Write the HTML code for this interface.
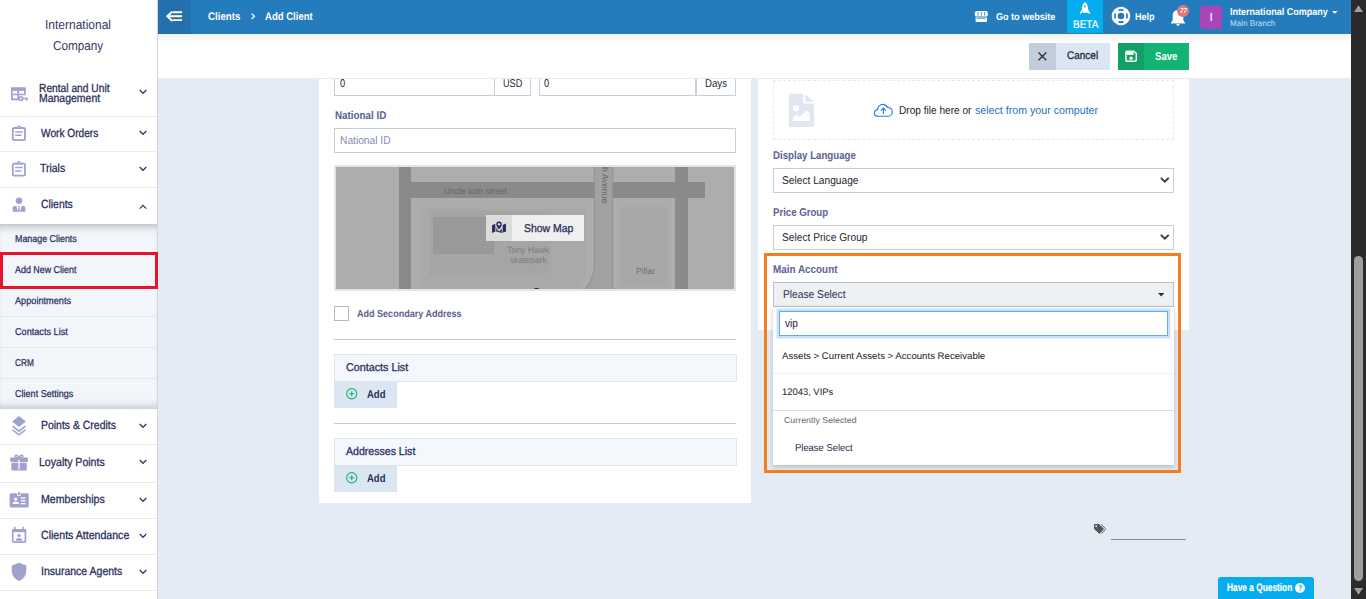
<!DOCTYPE html>
<html lang="en">
<head>
<meta charset="utf-8">
<title>Add Client</title>
<style>
*{box-sizing:border-box;margin:0;padding:0}
html,body{width:1366px;height:599px;overflow:hidden}
body{position:relative;background:#e4ebf4;font-family:"Liberation Sans",sans-serif;color:#2b2e5c;font-size:12px}
.abs{position:absolute}
.t{position:absolute;white-space:nowrap;line-height:1;transform-origin:0 0;text-rendering:geometricPrecision}
svg{position:absolute;overflow:visible}
#side{position:absolute;left:0;top:0;width:158px;height:599px;background:#fff;border-right:1px solid #d4d8de;z-index:5}
#hdr{position:absolute;left:158px;top:0;width:1193px;height:34px;background:#247cbd;z-index:4}
#bar{position:absolute;left:158px;top:34px;width:1193px;height:45px;background:linear-gradient(#f1f1f1,#fff 9px);z-index:3;border-bottom:1px solid #e8ebef}
#sb{position:absolute;left:1351px;top:0;width:15px;height:599px;background:#2b2b2b;z-index:9}
#main{position:absolute;left:0;top:0;width:1351px;height:599px;z-index:1;overflow:hidden}
#over{position:absolute;left:0;top:0;width:1351px;height:599px;z-index:2;overflow:hidden}
</style>
</head>
<body>
<div id="side">
<div class="t" style="left:45.00px;top:18.00px;font-size:13px;color:#34375f;transform:scaleX(0.9223);">International</div>
<div class="t" style="left:53.00px;top:39.00px;font-size:13px;color:#34375f;transform:scaleX(0.9025);">Company</div>
<div class="abs" style="left:0px;top:116px;width:157px;height:1px;background:#ececee;"></div>
<div class="abs" style="left:0px;top:151px;width:157px;height:1px;background:#ececee;"></div>
<div class="abs" style="left:0px;top:187px;width:157px;height:1px;background:#ececee;"></div>
<div class="abs" style="left:0px;top:444px;width:157px;height:1px;background:#ececee;"></div>
<div class="abs" style="left:0px;top:482px;width:157px;height:1px;background:#ececee;"></div>
<div class="abs" style="left:0px;top:518px;width:157px;height:1px;background:#ececee;"></div>
<div class="abs" style="left:0px;top:554px;width:157px;height:1px;background:#ececee;"></div>
<div class="abs" style="left:0px;top:590px;width:157px;height:1px;background:#ececee;"></div>
<div class="abs" style="left:0px;top:224px;width:157px;height:184.5px;background:#f2f5fa;box-shadow:inset 0 9px 8px -7px rgba(30,35,45,.30),inset 0 -9px 8px -7px rgba(30,35,45,.24);"></div>
<div class="abs" style="left:0px;top:316px;width:157px;height:1px;background:#e2e7ee;"></div>
<div class="abs" style="left:0px;top:347px;width:157px;height:1px;background:#e2e7ee;"></div>
<div class="abs" style="left:0px;top:378px;width:157px;height:1px;background:#e2e7ee;"></div>
<div class="abs" style="left:0px;top:252px;width:158px;height:36.5px;border:3px solid #e8122d;"></div>
<div class="t" style="left:39.40px;top:83.00px;font-size:11.8px;color:#2b2e5c;transform:scaleX(0.8669);-webkit-text-stroke:0.3px #2b2e5c;">Rental and Unit</div>
<div class="t" style="left:39.40px;top:93.00px;font-size:11.8px;color:#2b2e5c;transform:scaleX(0.8878);-webkit-text-stroke:0.3px #2b2e5c;">Management</div>
<div class="t" style="left:40.60px;top:128.00px;font-size:11.8px;color:#2b2e5c;transform:scaleX(0.8599);-webkit-text-stroke:0.3px #2b2e5c;">Work Orders</div>
<div class="t" style="left:40.40px;top:163.00px;font-size:11.8px;color:#2b2e5c;transform:scaleX(0.8862);-webkit-text-stroke:0.3px #2b2e5c;">Trials</div>
<div class="t" style="left:40.70px;top:199.00px;font-size:11.8px;color:#2b2e5c;transform:scaleX(0.8803);-webkit-text-stroke:0.3px #2b2e5c;">Clients</div>
<div class="t" style="left:15.20px;top:235.00px;font-size:10px;color:#2b2e5c;transform:scaleX(0.8892);-webkit-text-stroke:0.25px #2b2e5c;">Manage Clients</div>
<div class="t" style="left:15.20px;top:266.00px;font-size:10px;color:#2b2e5c;transform:scaleX(0.8907);-webkit-text-stroke:0.25px #2b2e5c;">Add New Client</div>
<div class="t" style="left:15.20px;top:297.00px;font-size:10px;color:#2b2e5c;transform:scaleX(0.9162);-webkit-text-stroke:0.25px #2b2e5c;">Appointments</div>
<div class="t" style="left:15.20px;top:328.00px;font-size:10px;color:#2b2e5c;transform:scaleX(0.9133);-webkit-text-stroke:0.25px #2b2e5c;">Contacts List</div>
<div class="t" style="left:15.20px;top:359.00px;font-size:10px;color:#2b2e5c;transform:scaleX(0.8264);-webkit-text-stroke:0.25px #2b2e5c;">CRM</div>
<div class="t" style="left:15.20px;top:390.00px;font-size:10px;color:#2b2e5c;transform:scaleX(0.9054);-webkit-text-stroke:0.25px #2b2e5c;">Client Settings</div>
<div class="t" style="left:40.60px;top:420.00px;font-size:11.8px;color:#2b2e5c;transform:scaleX(0.8856);-webkit-text-stroke:0.3px #2b2e5c;">Points &amp; Credits</div>
<div class="t" style="left:39.40px;top:457.00px;font-size:11.8px;color:#2b2e5c;transform:scaleX(0.8945);-webkit-text-stroke:0.3px #2b2e5c;">Loyalty Points</div>
<div class="t" style="left:40.60px;top:494.00px;font-size:11.8px;color:#2b2e5c;transform:scaleX(0.9002);-webkit-text-stroke:0.3px #2b2e5c;">Memberships</div>
<div class="t" style="left:40.60px;top:530.00px;font-size:11.8px;color:#2b2e5c;transform:scaleX(0.8975);-webkit-text-stroke:0.3px #2b2e5c;">Clients Attendance</div>
<div class="t" style="left:40.60px;top:566.00px;font-size:11.8px;color:#2b2e5c;transform:scaleX(0.8914);-webkit-text-stroke:0.3px #2b2e5c;">Insurance Agents</div>
<svg style="left:138.8px;top:88.80000000000001px" width="8" height="6" viewBox="0 0 8 6"><path d="M0.7 1 L4 4.3 L7.3 1" fill="none" stroke="#33365f" stroke-width="1.25"/></svg>
<svg style="left:138.8px;top:130.4px" width="8" height="6" viewBox="0 0 8 6"><path d="M0.7 1 L4 4.3 L7.3 1" fill="none" stroke="#33365f" stroke-width="1.25"/></svg>
<svg style="left:138.8px;top:166.0px" width="8" height="6" viewBox="0 0 8 6"><path d="M0.7 1 L4 4.3 L7.3 1" fill="none" stroke="#33365f" stroke-width="1.25"/></svg>
<svg style="left:138.8px;top:423.0px" width="8" height="6" viewBox="0 0 8 6"><path d="M0.7 1 L4 4.3 L7.3 1" fill="none" stroke="#33365f" stroke-width="1.25"/></svg>
<svg style="left:138.8px;top:459.4px" width="8" height="6" viewBox="0 0 8 6"><path d="M0.7 1 L4 4.3 L7.3 1" fill="none" stroke="#33365f" stroke-width="1.25"/></svg>
<svg style="left:138.8px;top:496.9px" width="8" height="6" viewBox="0 0 8 6"><path d="M0.7 1 L4 4.3 L7.3 1" fill="none" stroke="#33365f" stroke-width="1.25"/></svg>
<svg style="left:138.8px;top:533.0px" width="8" height="6" viewBox="0 0 8 6"><path d="M0.7 1 L4 4.3 L7.3 1" fill="none" stroke="#33365f" stroke-width="1.25"/></svg>
<svg style="left:138.8px;top:569.0px" width="8" height="6" viewBox="0 0 8 6"><path d="M0.7 1 L4 4.3 L7.3 1" fill="none" stroke="#33365f" stroke-width="1.25"/></svg>
<svg style="left:138.8px;top:203.8px" width="8" height="6" viewBox="0 0 8 6"><path d="M0.7 4.6 L4 1.3 L7.3 4.6" fill="none" stroke="#33365f" stroke-width="1.25"/></svg>
<svg style="left:0;top:0" width="40" height="599" viewBox="0 0 40 599">
<g fill="none" stroke="#a0a1ce" stroke-width="1.7"><path d="M18.8 99.4 H11.9 V88.4 H24.9 V95"/><path d="M11.9 94.5 H24.9 M18.2 90 V99.4"/><circle cx="20.9" cy="98.5" r="1.8" stroke-width="1.6"/><path d="M22.8 98.5 H28 M26.6 98.5 V100.7" stroke-width="1.7"/></g><rect x="11.05" y="87.5" width="14.7" height="3.4" fill="#a0a1ce"/>
<g transform="translate(0 0)"><rect x="12.8" y="128" width="12.2" height="12.1" rx="1.2" fill="none" stroke="#a0a1ce" stroke-width="1.8"/><path d="M15.2 132 H22.7 M15.2 135.3 H21.5" stroke="#a0a1ce" stroke-width="1.5"/><path d="M15.2 128.8 V127.4 H17 C17.1 126 17.9 125.2 18.9 125.2 C19.9 125.2 20.7 126 20.8 127.4 H22.6 V128.8 Z" fill="#a0a1ce"/><circle cx="18.9" cy="127.1" r="0.6" fill="#fff"/></g>
<g transform="translate(0 35.6)"><rect x="12.8" y="128" width="12.2" height="12.1" rx="1.2" fill="none" stroke="#a0a1ce" stroke-width="1.8"/><path d="M15.2 132 H22.7 M15.2 135.3 H21.5" stroke="#a0a1ce" stroke-width="1.5"/><path d="M15.2 128.8 V127.4 H17 C17.1 126 17.9 125.2 18.9 125.2 C19.9 125.2 20.7 126 20.8 127.4 H22.6 V128.8 Z" fill="#a0a1ce"/><circle cx="18.9" cy="127.1" r="0.6" fill="#fff"/></g>
<g fill="#a0a1ce"><circle cx="19" cy="200.8" r="3.25"/><path d="M12.7 211.8 V208.2 C12.7 206.9 13.7 206 15 206 H16.4 L18.1 211.8 Z"/><path d="M25.4 211.8 V208.2 C25.4 206.9 24.4 206 23.1 206 H21.7 L20 211.8 Z"/><path d="M18.2 206.1 H19.9 L19.5 207.4 L20.2 211.8 H17.9 L18.6 207.4 Z"/></g>
<path d="M19 416 L25.9 421.5 L19 427 L12.1 421.5 Z" fill="#a0a1ce"/><path d="M12.6 426.2 L19 431.2 L25.4 426.2 M12.6 429.8 L19 434.8 L25.4 429.8" fill="none" stroke="#a0a1ce" stroke-width="1.6"/>
<g fill="#a0a1ce"><rect x="10.2" y="457.6" width="17.7" height="4.4" rx="0.8"/><rect x="11.3" y="462.8" width="15.5" height="7.8" rx="1"/></g><rect x="18.4" y="459.8" width="1.3" height="9.6" fill="#fff"/><path d="M19 457.4 C16.4 457.6 14.6 457 15.2 455.8 C16 454.6 18.2 455.4 19 457.4 C19.8 455.4 22 454.6 22.8 455.8 C23.4 457 21.6 457.6 19 457.4 Z" fill="none" stroke="#a0a1ce" stroke-width="1.5"/>
<rect x="9.6" y="493.3" width="19.1" height="14.3" rx="1.6" fill="#a0a1ce"/><rect x="17.2" y="493" width="3.4" height="2.9" fill="#fff"/><rect x="18" y="491.8" width="1.9" height="3.4" rx="0.6" fill="#a0a1ce"/><g fill="#fff"><circle cx="15.7" cy="499.1" r="1.65"/><path d="M12.6 504 C12.6 502.2 13.8 501.5 15.7 501.5 C17.6 501.5 18.9 502.2 18.9 504 Z"/><rect x="20.8" y="497.4" width="4.7" height="1.3"/><rect x="20.8" y="500.2" width="4.7" height="1.3"/><rect x="20.8" y="503" width="4.7" height="1.3"/></g>
<rect x="12.7" y="529.9" width="12.7" height="12.2" rx="1.2" fill="none" stroke="#a0a1ce" stroke-width="1.7"/><rect x="12" y="529.1" width="14.1" height="3.1" fill="#a0a1ce"/><rect x="14" y="526.9" width="1.6" height="3" fill="#a0a1ce"/><rect x="22.4" y="526.9" width="1.6" height="3" fill="#a0a1ce"/><ellipse cx="19" cy="535.6" rx="1.8" ry="1.6" fill="#a0a1ce"/><path d="M15.7 540.7 C15.7 538.7 17 537.9 19 537.9 C21 537.9 22.4 538.7 22.4 540.7 Z" fill="#a0a1ce"/>
<path d="M19 562.8 L26.3 565.6 V571 C26.3 575.4 23.4 579 19 581 C14.6 579 11.8 575.4 11.8 571 V565.6 Z" fill="#a0a1ce"/>
</svg>
</div>
<div id="hdr">
<div class="abs" style="left:0px;top:0px;width:33px;height:34px;background:#2270ad;"></div>
<svg style="left:8px;top:11px" width="17" height="11" viewBox="166 11 17 11"><g fill="none" stroke="#fff"><path d="M172.8 12.3 H182.1 M172.8 20.1 H182.1" stroke-width="1.9"/><path d="M168.4 16.2 H182.1" stroke-width="2"/><path d="M172.4 11.5 L167.3 16.2 L172.4 20.9" stroke-width="2"/></g></svg>
<div class="t" style="left:50.40px;top:12.00px;font-size:11px;color:#fff;transform:scaleX(0.8831);font-weight:bold;">Clients</div>
<svg style="left:92.69999999999999px;top:13.4px" width="4.2" height="6.6" viewBox="0 0 4.2 6.6"><path d="M0.6 0.6 L3.4 3.3 L0.6 6" fill="none" stroke="#fff" stroke-width="1.3"/></svg>
<div class="t" style="left:107.00px;top:12.00px;font-size:11px;color:#fff;transform:scaleX(0.8673);font-weight:bold;">Add Client</div>
<svg style="left:816px;top:11px" width="15" height="11" viewBox="974 11 15 11"><path d="M976.6 11.1 H985.9 C987.2 11.1 987.9 12.6 987.9 13.9 C987.9 15.4 987.2 16.6 985.9 16.6 H976.6 C975.3 16.6 974.7 15.4 974.7 13.9 C974.7 12.6 975.3 11.1 976.6 11.1 Z M975.6 17.4 H987 V21.2 C987 21.7 986.7 22 986.2 22 H976.4 C975.9 22 975.6 21.7 975.6 21.2 Z" fill="#fff"/><path d="M978.2 12 L977.8 15.8 M981.3 12 V15.8 M984.4 12 L984.8 15.8" stroke="#247cbd" stroke-width="0.8"/><path d="M976.8 18.5 H985.8" stroke="#247cbd" stroke-width="0.6"/></svg>
<div class="t" style="left:838.30px;top:13.00px;font-size:10px;color:#fff;transform:scaleX(0.9060);font-weight:bold;">Go to website</div>
<div class="abs" style="left:909px;top:0px;width:36px;height:33px;background:#05adef;"></div>
<svg style="left:921px;top:1px" width="12" height="14" viewBox="1079 1 12 14"><path d="M1085 2.1 C1087.3 3.8 1087.9 6 1087.9 8.4 V12.7 H1082.1 V8.4 C1082.1 6 1082.7 3.8 1085 2.1 Z M1082 9.2 L1080 12.4 V13.9 L1082.6 12.8 Z M1088 9.2 L1090 12.4 V13.9 L1087.4 12.8 Z" fill="#fff"/><circle cx="1085" cy="6.4" r="1" fill="#0eaeee"/></svg>
<div class="t" style="left:914.80px;top:20.00px;font-size:11px;color:#fff;transform:scaleX(0.9056);-webkit-text-stroke:0.2px #fff;">BETA</div>
<svg style="left:952.9000000000001px;top:6.1px" width="20" height="20" viewBox="-10 -10 20 20"><circle r="9.3" fill="#fff"/><circle r="3.3" fill="#247cbd"/><g fill="none" stroke="#247cbd" stroke-width="1.7"><path d="M-2.5 -5.6 A6.1 6.1 0 0 1 2.5 -5.6"/><path d="M-2.5 5.6 A6.1 6.1 0 0 0 2.5 5.6"/><path d="M-5.6 -2.5 A6.1 6.1 0 0 0 -5.6 2.5"/><path d="M5.6 -2.5 A6.1 6.1 0 0 1 5.6 2.5"/></g></svg>
<div class="t" style="left:977.20px;top:13.00px;font-size:10px;color:#fff;transform:scaleX(0.8991);font-weight:bold;">Help</div>
<svg style="left:1013px;top:9px" width="14" height="17" viewBox="1171 9 14 17"><path d="M1178 10 C1181 10 1183.3 12.2 1183.3 15.4 V19.6 C1183.3 20.8 1183.9 21.6 1184.9 22.4 V23.4 H1171.1 V22.4 C1172.1 21.6 1172.7 20.8 1172.7 19.6 V15.4 C1172.7 12.2 1175 10 1178 10 Z M1176.3 24 H1179.7 C1179.5 25.2 1178.9 25.8 1178 25.8 C1177.1 25.8 1176.5 25.2 1176.3 24 Z" fill="#fff"/></svg>
<div class="abs" style="left:1019px;top:5px;width:11.8px;height:11.8px;background:#e17778;border-radius:50%;"></div>
<div class="t" style="left:1021.60px;top:8.00px;font-size:7px;color:#fff;transform:scaleX(0.8930);font-weight:bold;font-style:italic;">77</div>
<div class="abs" style="left:1042px;top:6px;width:22px;height:23px;background:#aa44b9;border-radius:3px;"></div>
<div class="t" style="left:1051.70px;top:13.00px;font-size:11.5px;color:#fff;transform:scaleX(0.7529);font-weight:bold;">I</div>
<div class="t" style="left:1071.70px;top:8.00px;font-size:10px;color:#fff;transform:scaleX(0.9033);font-weight:bold;">International Company</div>
<svg style="left:1173.5px;top:11.2px" width="5.6" height="2.8" viewBox="0 0 5.6 2.8"><path d="M0 0 H5.6 L2.8 2.8 Z" fill="#fff"/></svg>
<div class="t" style="left:1071.70px;top:20.00px;font-size:8.2px;color:#b4d2ea;transform:scaleX(0.9861);-webkit-text-stroke:0.15px #b4d2ea;">Main Branch</div>
</div>
<div id="bar">
<div class="abs" style="left:871px;top:9px;width:27px;height:27px;background:#c3cedc;"></div>
<div class="abs" style="left:898px;top:9px;width:54px;height:27px;background:#dbe6f3;"></div>
<svg style="left:880.2px;top:18px" width="8.8" height="8.8" viewBox="0 0 8.8 8.8"><path d="M0.5 0.5 L8.3 8.3 M8.3 0.5 L0.5 8.3" stroke="#2a2a38" stroke-width="1.25"/></svg>
<div class="t" style="left:909.30px;top:17.00px;font-size:11.2px;color:#272736;transform:scaleX(0.8934);-webkit-text-stroke:0.3px #272736;">Cancel</div>
<div class="abs" style="left:960px;top:9px;width:26px;height:27px;background:#12a067;"></div>
<div class="abs" style="left:986px;top:9px;width:45px;height:27px;background:#13b373;"></div>
<svg style="left:967px;top:16px" width="13" height="13" viewBox="1125 50 13 13"><path d="M1127 51.1 H1133.8 L1136.3 53.6 V60 C1136.3 60.8 1135.8 61.2 1135 61.2 H1127 C1126.3 61.2 1125.9 60.8 1125.9 60 V52.3 C1125.9 51.5 1126.3 51.1 1127 51.1 Z" fill="none" stroke="#fff" stroke-width="1.45"/><rect x="1126.6" y="51.6" width="7" height="3.3" fill="#fff"/><circle cx="1131.1" cy="58.3" r="1.7" fill="#fff"/></svg>
<div class="t" style="left:997.30px;top:18.00px;font-size:11.3px;color:#fff;transform:scaleX(0.8511);font-weight:bold;">Save</div>
</div>
<div id="sb">
<div class="abs" style="left:3px;top:256px;width:9px;height:325px;border-radius:4.5px;background:#9f9f9f"></div>
<svg style="left:3px;top:5px" width="9" height="7" viewBox="0 0 9 7"><path d="M4.5 0.3 L9 7 L0 7 Z" fill="#9f9f9f"/></svg>
<svg style="left:3px;top:588px" width="9" height="7" viewBox="0 0 9 7"><path d="M4.5 6.7 L9 0 L0 0 Z" fill="#9f9f9f"/></svg>
</div>
<div id="main">
<div class="abs" style="left:319px;top:60px;width:432px;height:442.6px;background:#fff;"></div>
<div class="abs" style="left:334px;top:71px;width:197px;height:25px;background:#fff;border:1px solid #c7cfdb;"></div>
<div class="abs" style="left:494px;top:71px;width:1px;height:25px;background:#c7cfdb;"></div>
<div class="abs" style="left:539px;top:71px;width:197px;height:25px;background:#fff;border:1px solid #c7cfdb;"></div>
<div class="abs" style="left:695px;top:71px;width:2px;height:25px;background:#c7cfdb;"></div>
<div class="t" style="left:340.40px;top:79.00px;font-size:11.3px;color:#26262e;transform:scaleX(0.8238);">0</div>
<div class="t" style="left:503.00px;top:79.00px;font-size:11.3px;color:#26262e;transform:scaleX(0.8084);">USD</div>
<div class="t" style="left:544.40px;top:79.00px;font-size:11.3px;color:#26262e;transform:scaleX(0.8238);">0</div>
<div class="t" style="left:704.70px;top:79.00px;font-size:11.3px;color:#26262e;transform:scaleX(0.8544);">Days</div>
<div class="t" style="left:334.60px;top:111.00px;font-size:11.3px;color:#5c6093;transform:scaleX(0.8703);font-weight:bold;">National ID</div>
<div class="abs" style="left:334px;top:128px;width:402px;height:25px;background:#fff;border:1px solid #c7cfdb;"></div>
<div class="t" style="left:340.40px;top:136.00px;font-size:11.3px;color:#8689b4;transform:scaleX(0.9046);">National ID</div>
<div class="abs" style="left:334px;top:165px;width:402px;height:125.5px;background:#adadad;border:2px solid #dfe5ea;"></div>
<div class="abs" style="left:336px;top:167px;width:398px;height:121.5px;overflow:hidden">
<div class="abs" style="left:83.69999999999999px;top:39.80000000000001px;width:166.3px;height:90px;background:#a9a9a9;border-radius:0 0 26px 0;"></div>
<div class="abs" style="left:92.60000000000002px;top:44.400000000000006px;width:122px;height:64.3px;background:#a5a5a5;border-radius:0 0 14px 0;"></div>
<div class="abs" style="left:97.19999999999999px;top:49.599999999999994px;width:60.6px;height:37.6px;background:#999;"></div>
<div class="abs" style="left:284px;top:39.69999999999999px;width:48.4px;height:80.2px;background:#a8a8a8;"></div>
<div class="abs" style="left:63.30000000000001px;top:-7px;width:11.5px;height:140px;background:#8a8a8a;"></div>
<div class="abs" style="left:74.80000000000001px;top:15.199999999999989px;width:293.8px;height:15.9px;background:#8a8a8a;"></div>
<div class="abs" style="left:339px;top:-7px;width:12.6px;height:140px;background:#8a8a8a;"></div>
<svg style="left:234px;top:-7px" width="50" height="135" viewBox="570 160 50 135"><path d="M594.3 160 V262 C594.3 276 590 284 582 292 L600 296 L612.8 296 V160 Z" fill="#a1a1a1" stroke="#8c8c8c" stroke-width="0.8"/></svg>
<div class="t" style="left:273.4px;top:-0.4000000000000057px;font-size:9px;color:#666;transform:rotate(90deg) scaleX(.97);transform-origin:0 0">h Avenue</div>
<div class="t" style="left:107.70px;top:20.00px;font-size:9px;color:#646464;transform:scaleX(0.9603);">Uncle tom street</div>
<div class="t" style="left:170.90px;top:79.00px;font-size:9px;color:#7c7c7c;transform:scaleX(0.9645);">Tony Hawk</div>
<div class="t" style="left:173.70px;top:89.00px;font-size:9px;color:#7c7c7c;transform:scaleX(0.9446);">skatepark</div>
<div class="t" style="left:299.70px;top:100.00px;font-size:9px;color:#6e6e6e;transform:scaleX(0.9550);">Pillar</div>
<div class="abs" style="left:196.5px;top:121px;width:7px;height:6px;background:#222;border-radius:50%;"></div>
<div class="abs" style="left:150px;top:48px;width:26px;height:26px;background:#dcdcdc;"></div>
<div class="abs" style="left:176px;top:48px;width:72px;height:26px;background:#efefef;"></div>
<svg style="left:155.60000000000002px;top:54.400000000000006px" width="14" height="12" viewBox="0 0 14 12"><path d="M0 4.2 L3.4 2.8 V10.6 L0 12 Z M10.6 4 L14 2.6 V10.4 L10.6 11.8 Z M4.2 6.6 V10.6 L9.8 11.9 V7.6 C9 8.8 8 9.8 7 10.6 C6 9.8 5 8.4 4.2 6.6 Z" fill="#2b2e5c"/><path d="M7 0 C8.8 0 10.2 1.4 10.2 3.2 C10.2 5.2 8.4 7.4 7 8.8 C5.6 7.4 3.8 5.2 3.8 3.2 C3.8 1.4 5.2 0 7 0 Z" fill="#2b2e5c" stroke="#dcdcdc" stroke-width="0.8"/><circle cx="7" cy="3.2" r="1.2" fill="#dcdcdc"/></svg>
<div class="t" style="left:187.50px;top:57.00px;font-size:11.3px;color:#2b2e5c;transform:scaleX(0.9263);-webkit-text-stroke:0.3px #2b2e5c;">Show Map</div>
</div>
<div class="abs" style="left:334px;top:306px;width:15px;height:15px;background:#fff;border:1px solid #b9b9b9;"></div>
<div class="t" style="left:357.20px;top:310.00px;font-size:10.2px;color:#5c6093;transform:scaleX(0.8869);font-weight:bold;">Add Secondary Address</div>
<div class="abs" style="left:334px;top:339px;width:402px;height:1px;background:#cbcbcb;"></div>
<div class="abs" style="left:333.5px;top:354px;width:403px;height:27.5px;background:#f4f8fc;border:1px solid #dde6f1;"></div>
<div class="t" style="left:345.80px;top:363.00px;font-size:11.3px;color:#2b2e5c;transform:scaleX(0.9514);-webkit-text-stroke:0.3px #2b2e5c;">Contacts List</div>
<div class="abs" style="left:334px;top:381.5px;width:63px;height:26px;background:#dbe6f3;"></div>
<svg style="left:345.5px;top:388.1px" width="11.5" height="11.5" viewBox="0 0 11.5 11.5"><circle cx="5.75" cy="5.75" r="5.1" fill="none" stroke="#20ad77" stroke-width="1.1"/><path d="M5.75 3.3 V8.2 M3.3 5.75 H8.2" stroke="#20ad77" stroke-width="1.2"/></svg>
<div class="t" style="left:366.60px;top:390.00px;font-size:11.2px;color:#2b2e5c;transform:scaleX(0.8506);font-weight:bold;">Add</div>
<div class="abs" style="left:334px;top:423px;width:402px;height:1px;background:#cbcbcb;"></div>
<div class="abs" style="left:333.5px;top:438px;width:403px;height:27.5px;background:#f4f8fc;border:1px solid #dde6f1;"></div>
<div class="t" style="left:345.80px;top:447.00px;font-size:11.3px;color:#2b2e5c;transform:scaleX(0.9355);-webkit-text-stroke:0.3px #2b2e5c;">Addresses List</div>
<div class="abs" style="left:334px;top:465.5px;width:63px;height:26px;background:#dbe6f3;"></div>
<svg style="left:345.5px;top:472.1px" width="11.5" height="11.5" viewBox="0 0 11.5 11.5"><circle cx="5.75" cy="5.75" r="5.1" fill="none" stroke="#20ad77" stroke-width="1.1"/><path d="M5.75 3.3 V8.2 M3.3 5.75 H8.2" stroke="#20ad77" stroke-width="1.2"/></svg>
<div class="t" style="left:366.60px;top:474.00px;font-size:11.2px;color:#2b2e5c;transform:scaleX(0.8506);font-weight:bold;">Add</div>
<div class="abs" style="left:758px;top:60px;width:431px;height:269.5px;background:#fff;"></div>
<div class="abs" style="left:773px;top:80px;width:401px;height:59.5px;border:1px dashed #e3e9f1;"></div>
<svg style="left:789px;top:93px" width="26" height="35" viewBox="789 93 26 35"><path d="M790.6 93.8 H803.2 V103.6 H814.1 V125.4 C814.1 126.4 813.5 127 812.5 127 H790.6 C789.6 127 789 126.4 789 125.4 V95.4 C789 94.4 789.6 93.8 790.6 93.8 Z M805.5 93.9 L814 101.7 H805.5 Z" fill="#e1e7f0"/><circle cx="796.1" cy="108.3" r="3.1" fill="#fff"/><path d="M793 120.9 V117.6 L796.6 114.4 L799.4 117 L806.6 110.6 L809.7 113.6 V120.9 Z" fill="#fff"/></svg>
<svg style="left:873px;top:103px" width="21" height="15" viewBox="873 103 21 15"><path d="M878 116.2 C875.8 116.2 874.4 114.8 874.4 112.9 C874.4 111.1 875.7 109.8 877.6 109.6 C877.8 106.6 879.9 104.3 882.8 104.3 C885 104.3 886.7 105.5 887.6 107.5 C890.2 107.3 892.3 109.2 892.3 111.9 C892.3 114.3 890.6 116.2 888.4 116.2 Z" fill="none" stroke="#2478f2" stroke-width="1.15"/><path d="M883.4 113.9 V108.2 M880.8 110.7 L883.4 108.1 L886 110.7" fill="none" stroke="#2478f2" stroke-width="1.15"/></svg>
<div class="t" style="left:899.40px;top:106.00px;font-size:11.3px;color:#1c1c24;transform:scaleX(0.8949);">Drop file here or</div>
<div class="t" style="left:975.40px;top:106.00px;font-size:11.3px;color:#1b72c4;transform:scaleX(0.9423);">select from your computer</div>
<div class="t" style="left:773.40px;top:151.00px;font-size:11.3px;color:#5c6093;transform:scaleX(0.8573);font-weight:bold;">Display Language</div>
<div class="abs" style="left:773px;top:168px;width:401px;height:25px;background:#fff;border:1px solid #c7cfdb;"></div>
<div class="t" style="left:782.00px;top:176.00px;font-size:11.3px;color:#26262e;transform:scaleX(0.9018);">Select Language</div>
<svg style="left:1160.2px;top:177.1px" width="9.6" height="6" viewBox="0 0 9.6 6"><path d="M0.9 0.9 L4.8 4.7 L8.7 0.9" fill="none" stroke="#353b47" stroke-width="1.9"/></svg>
<div class="t" style="left:773.40px;top:208.00px;font-size:11.3px;color:#5c6093;transform:scaleX(0.8525);font-weight:bold;">Price Group</div>
<div class="abs" style="left:773px;top:225px;width:401px;height:25px;background:#fff;border:1px solid #c7cfdb;"></div>
<div class="t" style="left:782.00px;top:233.00px;font-size:11.3px;color:#26262e;transform:scaleX(0.9016);">Select Price Group</div>
<svg style="left:1160.2px;top:234.1px" width="9.6" height="6" viewBox="0 0 9.6 6"><path d="M0.9 0.9 L4.8 4.7 L8.7 0.9" fill="none" stroke="#353b47" stroke-width="1.9"/></svg>
<div class="t" style="left:773.40px;top:265.00px;font-size:11.3px;color:#5c6093;transform:scaleX(0.8759);font-weight:bold;">Main Account</div>
<div class="abs" style="left:773px;top:282px;width:401px;height:25px;background:#edf1f3;border:1px solid #b7c3c8;"></div>
<div class="t" style="left:783.40px;top:290.00px;font-size:11.3px;color:#2a2c50;transform:scaleX(0.9048);">Please Select</div>
<svg style="left:1157.6px;top:292.6px" width="6.4" height="3.4" viewBox="0 0 6.4 3.4"><path d="M0 0 H6.4 L3.2 3.4 Z" fill="#2a2c4e"/></svg>
<svg style="left:1094.4px;top:523.6px" width="11.6" height="10" viewBox="0 0 11.6 10"><path d="M7.4 0.4 L11.4 4.6 C11.7 4.9 11.7 5.3 11.4 5.6 L7.6 9.6" fill="none" stroke="#555" stroke-width="0.9"/><path d="M0 0.8 C0 0.3 0.3 0 0.8 0 H4.6 C5 0 5.3 0.1 5.6 0.4 L9.6 4.6 C9.9 4.9 9.9 5.3 9.6 5.6 L6 9.6 C5.7 9.9 5.3 9.9 5 9.6 L0.4 5.2 C0.1 4.9 0 4.6 0 4.2 Z" fill="#555"/><circle cx="2.2" cy="2.2" r="0.9" fill="#e4ebf4"/></svg>
<div class="abs" style="left:1111px;top:539px;width:75px;height:1px;background:#8a8a8a;"></div>
<div class="abs" style="left:1218px;top:577px;width:96px;height:30px;background:#05adef;border-radius:3px 3px 0 0;"></div>
<div class="t" style="left:1227.00px;top:583.00px;font-size:10.8px;color:#fff;transform:scaleX(0.7717);font-weight:bold;-webkit-text-stroke:0.2px #fff;">Have a Question</div>
<div class="abs" style="left:1295.4px;top:583px;width:10px;height:10px;border-radius:50%;background:#fff"></div>
<div class="t" style="left:1298.40px;top:584.00px;font-size:8.5px;color:#0eaeee;transform:scaleX(0.8096);font-weight:bold;">?</div>
</div>
<div id="over">
<div class="abs" style="left:773px;top:307px;width:401px;height:158px;background:#fff;box-shadow:0 2px 5px rgba(40,60,90,.28);"></div>
<div class="abs" style="left:779px;top:310.5px;width:389px;height:25px;background:#fff;border:1px solid #66a9ea;box-shadow:0 0 0 2.5px #c9e2fb;"></div>
<div class="t" style="left:785.00px;top:319.00px;font-size:11.3px;color:#26262e;transform:scaleX(0.9004);">vip</div>
<div class="t" style="left:782.40px;top:352.00px;font-size:9.5px;color:#222;transform:scaleX(1.0128);">Assets &gt; Current Assets &gt; Accounts Receivable</div>
<div class="abs" style="left:773px;top:373px;width:401px;height:1px;background:#efefef;"></div>
<div class="t" style="left:782.40px;top:388.00px;font-size:9.5px;color:#222;transform:scaleX(0.9894);">12043, VIPs</div>
<div class="abs" style="left:773px;top:410px;width:401px;height:1px;background:#dcdcdc;"></div>
<div class="t" style="left:784.40px;top:416.00px;font-size:8.5px;color:#666;transform:scaleX(1.0381);">Currently Selected</div>
<div class="t" style="left:795.40px;top:444.00px;font-size:10px;color:#262646;transform:scaleX(0.9423);">Please Select</div>
<div class="abs" style="left:764px;top:253px;width:417px;height:219.5px;border:3px solid #f57d20;"></div>
</div>
</body>
</html>
